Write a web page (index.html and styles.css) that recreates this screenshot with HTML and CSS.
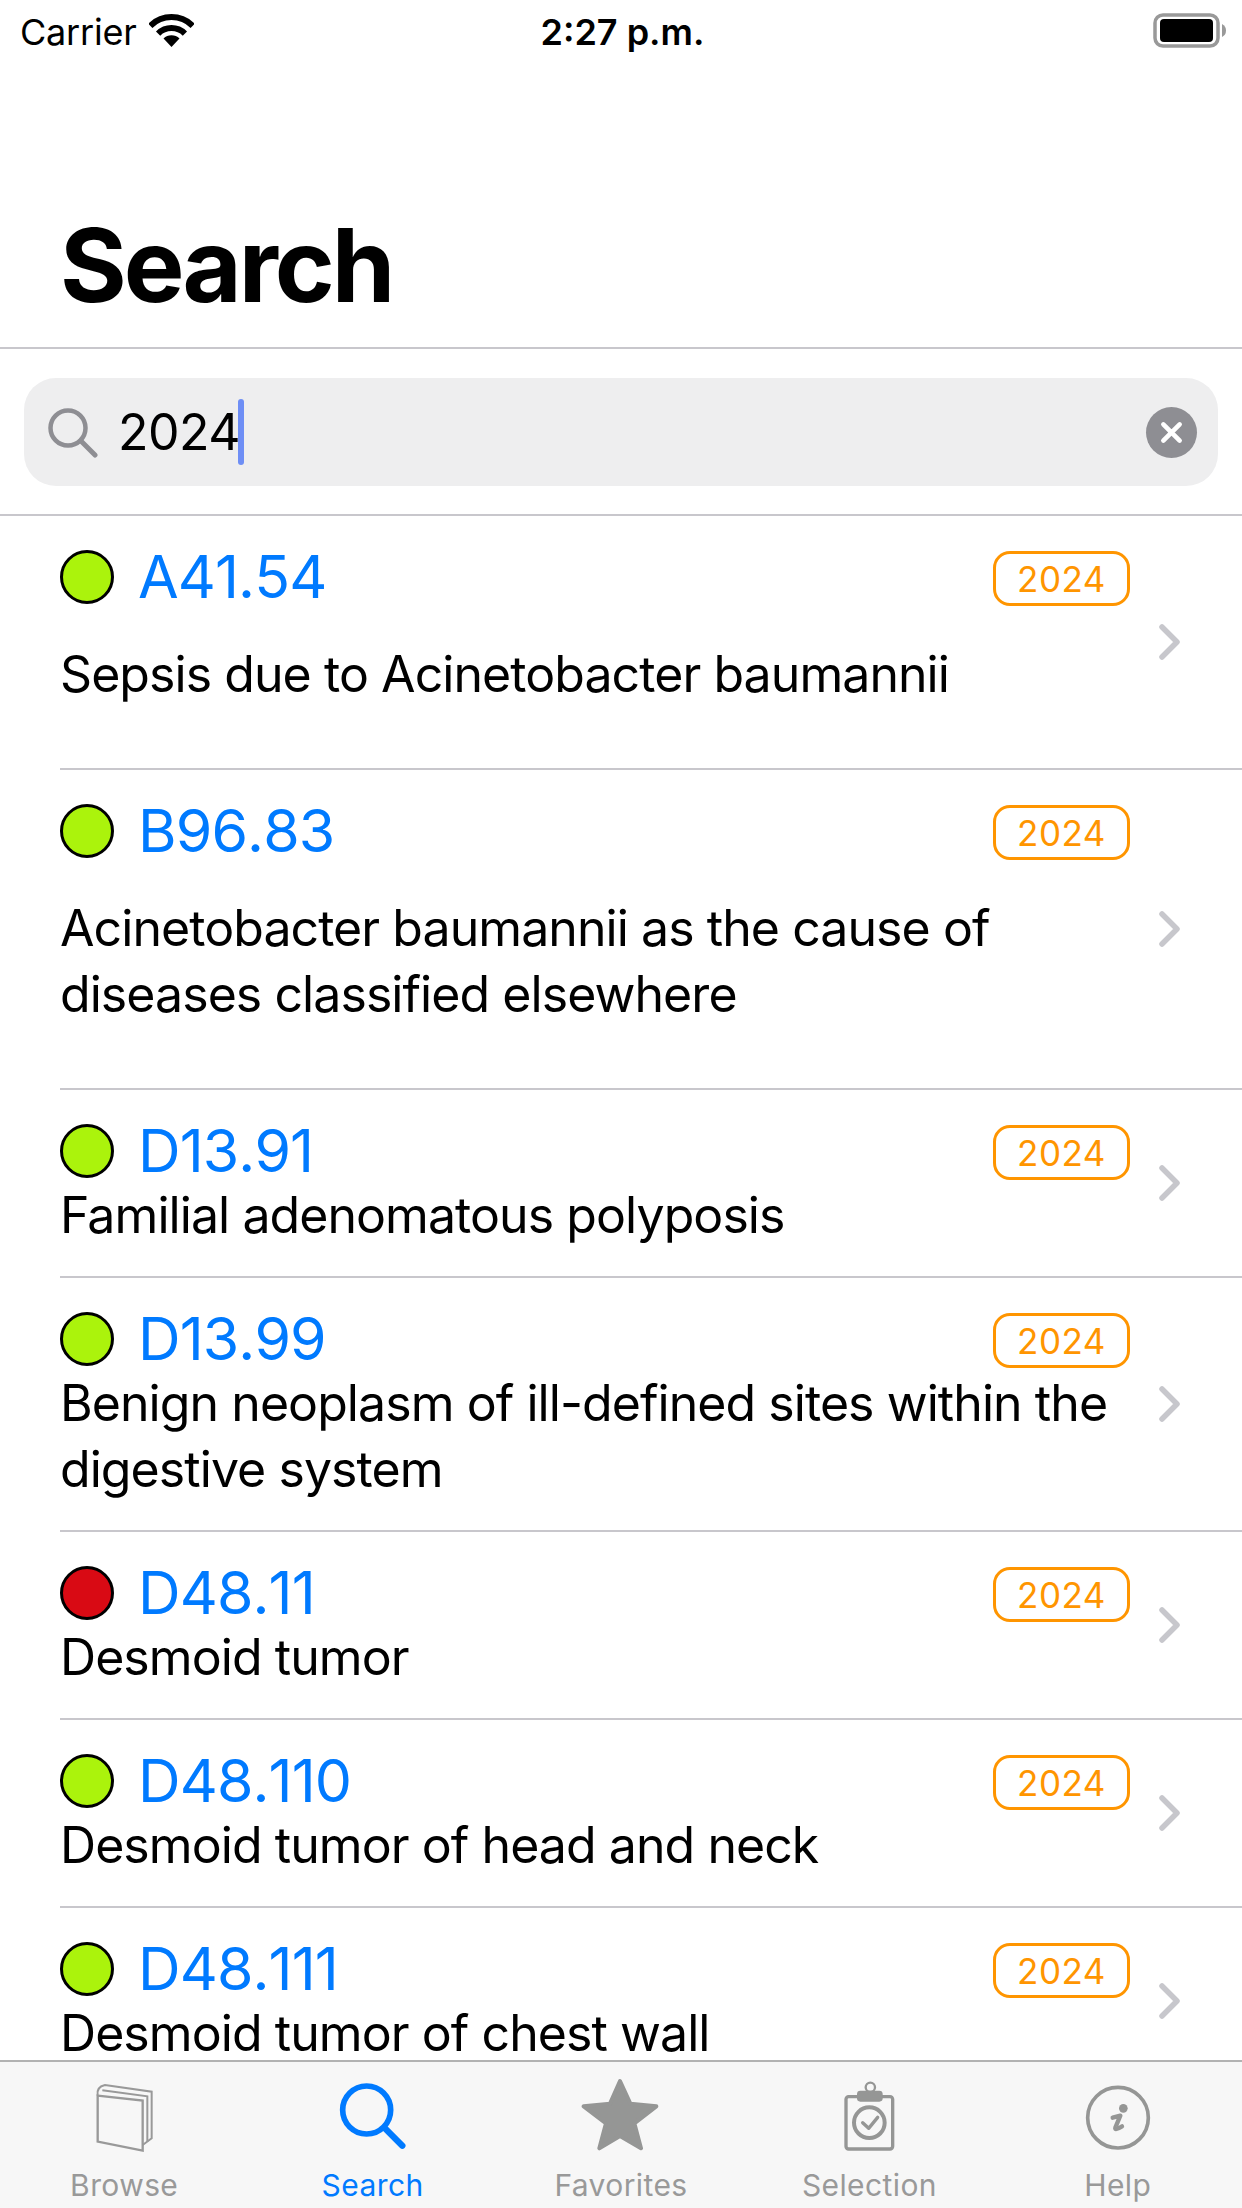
FILE: index.html
```html
<!DOCTYPE html>
<html lang="en">
<head>
<meta charset="utf-8">
<title>Search</title>
<link rel="stylesheet" href="styles.css">
</head>
<body>
<div class="app">
  <div class="status">
    <div class="status-left">
      <span>Carrier</span>
      <svg class="wifi" viewBox="0 0 45 33"><path d="M1.3 11.8A30 30 0 0 1 43.7 11.8" fill="none" stroke="#000" stroke-width="6"/><path d="M9.1 19.6A19 19 0 0 1 35.9 19.6" fill="none" stroke="#000" stroke-width="6"/><path d="M22.5 33L14.5 24.5A11.5 11.5 0 0 1 30.5 24.5Z" fill="#000"/></svg>
    </div>
    <div class="status-time">2:27 p.m.</div>
    <div class="status-right">
      <svg class="battery" viewBox="0 0 74 36"><rect x="2" y="2" width="63" height="31" rx="8" fill="none" stroke="#999" stroke-width="3.5"/><rect x="7" y="6" width="53" height="23" rx="4" fill="#000"/><path d="M69 11Q73 13 73 17.500Q73 22 69 24Z" fill="#999"/></svg>
    </div>
  </div>
  <header class="title-bar"><h1 class="title">Search</h1></header>
  <div class="search-wrap">
    <div class="search-bar">
      <svg class="search-icon" viewBox="0 0 50 50"><circle cx="20" cy="20" r="17.500" fill="none" stroke="#8e8e93" stroke-width="4.500"/><path d="M33 33L47 47" stroke="#8e8e93" stroke-width="5" stroke-linecap="round"/></svg>
      <span class="search-text">2024</span><span class="caret"></span>
      <span class="clear"><svg viewBox="0 0 50 50"><path d="M17 17L33 33M33 17L17 33" stroke="#fff" stroke-width="4.500" stroke-linecap="round"/></svg></span>
    </div>
  </div>
  <main class="list">
    <article class="row loose"><div class="row-body"><div class="main"><div class="head"><span class="dot"></span><span class="code">A41.54</span><span class="badge">2024</span></div><p class="desc">Sepsis due to Acinetobacter baumannii</p></div><svg class="chev" viewBox="0 0 21 36"><path d="M3 3L18 18L3 33" fill="none" stroke="#c7c7cc" stroke-width="5.500" stroke-linecap="round" stroke-linejoin="round"/></svg></div></article>
    <article class="row loose"><div class="row-body"><div class="main"><div class="head"><span class="dot"></span><span class="code">B96.83</span><span class="badge">2024</span></div><p class="desc">Acinetobacter baumannii as the cause of diseases classified elsewhere</p></div><svg class="chev" viewBox="0 0 21 36"><path d="M3 3L18 18L3 33" fill="none" stroke="#c7c7cc" stroke-width="5.500" stroke-linecap="round" stroke-linejoin="round"/></svg></div></article>
    <article class="row"><div class="row-body"><div class="main"><div class="head"><span class="dot"></span><span class="code">D13.91</span><span class="badge">2024</span></div><p class="desc">Familial adenomatous polyposis</p></div><svg class="chev" viewBox="0 0 21 36"><path d="M3 3L18 18L3 33" fill="none" stroke="#c7c7cc" stroke-width="5.500" stroke-linecap="round" stroke-linejoin="round"/></svg></div></article>
    <article class="row"><div class="row-body"><div class="main"><div class="head"><span class="dot"></span><span class="code">D13.99</span><span class="badge">2024</span></div><p class="desc">Benign neoplasm of ill-defined sites within the digestive system</p></div><svg class="chev" viewBox="0 0 21 36"><path d="M3 3L18 18L3 33" fill="none" stroke="#c7c7cc" stroke-width="5.500" stroke-linecap="round" stroke-linejoin="round"/></svg></div></article>
    <article class="row"><div class="row-body"><div class="main"><div class="head"><span class="dot red"></span><span class="code">D48.11</span><span class="badge">2024</span></div><p class="desc">Desmoid tumor</p></div><svg class="chev" viewBox="0 0 21 36"><path d="M3 3L18 18L3 33" fill="none" stroke="#c7c7cc" stroke-width="5.500" stroke-linecap="round" stroke-linejoin="round"/></svg></div></article>
    <article class="row"><div class="row-body"><div class="main"><div class="head"><span class="dot"></span><span class="code">D48.110</span><span class="badge">2024</span></div><p class="desc">Desmoid tumor of head and neck</p></div><svg class="chev" viewBox="0 0 21 36"><path d="M3 3L18 18L3 33" fill="none" stroke="#c7c7cc" stroke-width="5.500" stroke-linecap="round" stroke-linejoin="round"/></svg></div></article>
    <article class="row"><div class="row-body"><div class="main"><div class="head"><span class="dot"></span><span class="code">D48.111</span><span class="badge">2024</span></div><p class="desc">Desmoid tumor of chest wall</p></div><svg class="chev" viewBox="0 0 21 36"><path d="M3 3L18 18L3 33" fill="none" stroke="#c7c7cc" stroke-width="5.500" stroke-linecap="round" stroke-linejoin="round"/></svg></div></article>
  </main>
  <nav class="tabs">
    <div class="tab">
      <svg class="tab-icon" viewBox="0 0 240 228"><path d="M41 56L176 71V221L41 194Z" fill="none" stroke="#999" stroke-width="7"/><path d="M41 56Q36 30 63 24L203 44V184L176 204" fill="none" stroke="#999" stroke-width="6"/><path d="M55 40L190 58V194" fill="none" stroke="#999" stroke-width="6"/></svg>
      <span class="tab-label">Browse</span>
    </div>
    <div class="tab active">
      <svg class="tab-icon" viewBox="0 0 240 228"><circle cx="101" cy="99" r="72" fill="none" stroke="#007aff" stroke-width="17"/><path d="M155 153L208 206" stroke="#007aff" stroke-width="19" stroke-linecap="round"/></svg>
      <span class="tab-label">Search</span>
    </div>
    <div class="tab">
      <svg class="tab-icon" viewBox="0 0 240 228"><path d="M117 12L148 80L226 88L160 139L180 214L117 177L55 214L75 139L8 88L87 80Z" fill="#959695" stroke="#959695" stroke-width="12" stroke-linejoin="round"/></svg>
      <span class="tab-label">Favorites</span>
    </div>
    <div class="tab">
      <svg class="tab-icon" viewBox="0 0 240 228"><rect x="51" y="59" width="140" height="157" rx="8" fill="none" stroke="#959695" stroke-width="10"/><rect x="84" y="41" width="77" height="33" rx="10" fill="#959695"/><circle cx="124" cy="31" r="14" fill="none" stroke="#959695" stroke-width="7"/><circle cx="121" cy="137" r="46" fill="none" stroke="#959695" stroke-width="12"/><path d="M101 137L119 154L146 121" fill="none" stroke="#959695" stroke-width="10" stroke-linecap="round" stroke-linejoin="round"/></svg>
      <span class="tab-label">Selection</span>
    </div>
    <div class="tab">
      <svg class="tab-icon" viewBox="0 0 240 228"><circle cx="120" cy="122" r="91" fill="none" stroke="#959695" stroke-width="11"/><circle cx="136" cy="94" r="13" fill="#959695"/><path d="M104 122L127 116L112 152Q109 162 132 148" fill="none" stroke="#959695" stroke-width="13" stroke-linejoin="round" stroke-linecap="round"/></svg>
      <span class="tab-label">Help</span>
    </div>
  </nav>
</div>
</body>
</html>
```
FILE: styles.css
```css
* { box-sizing: border-box; }
html, body { margin: 0; padding: 0; background: #fff; }
body { font-family: Inter, "Noto Sans", sans-serif; color: #000; }
.app { width: 1242px; height: 2208px; display: flex; flex-direction: column; overflow: hidden; background: #fff; }

.status { height: 64px; flex: none; display: grid; grid-template-columns: 1fr auto 1fr; align-items: center; padding: 0 15px 0 20px; font-size: 36px; }
.status-left { display: flex; align-items: center; gap: 12px; letter-spacing: -.2px; }
.status-time { font-weight: 600; letter-spacing: 0; margin-left: -2px; }
.status-right { display: flex; justify-content: flex-end; }
.wifi { width: 45px; height: 33px; display: block; margin-top: -4px; }
.battery { width: 74px; height: 36px; display: block; margin-top: -3px; }

.title-bar { height: 285px; flex: none; border-bottom: 2px solid #c8c7cc; padding: 0 0 0 60px; display: flex; align-items: flex-end; }
.title { margin: 0 0 22px; font-size: 102px; line-height: 120px; font-weight: 700; letter-spacing: -3px; }

.search-wrap { height: 167px; flex: none; padding: 29px 24px 0; border-bottom: 2px solid #c8c7cc; }
.search-bar { height: 108px; border-radius: 32px; background: #eeeeef; display: flex; align-items: center; padding: 0 21px 0 24px; }
.search-icon { width: 50px; height: 50px; flex: none; margin-top: 2px; }
.search-text { font-size: 50px; margin-left: 20px; letter-spacing: -.5px; }
.caret { width: 6px; height: 66px; border-radius: 3px; background: #6e8ef5; margin-left: -2px; }
.clear { width: 51px; height: 51px; border-radius: 50%; background: #8e8e93; margin-left: auto; display: block; }
.clear svg { width: 51px; height: 51px; display: block; }

.list { flex: 1; min-height: 0; overflow: hidden; }
.row { padding-left: 60px; }
.row-body { display: flex; align-items: center; border-bottom: 2px solid #c8c7cc; padding: 0 62px 0 0; }
.main { flex: 1; min-width: 0; padding: 33px 0 28px; }
.head { height: 56px; display: flex; align-items: center; }
.dot { width: 54px; height: 54px; border-radius: 50%; background: #abf30c; border: 3px solid #000; flex: none; }
.dot.red { background: #d90a14; }
.code { font-size: 59px; color: #007aff; margin-left: 24px; letter-spacing: -.9px; line-height: 56px; font-kerning: none; }
.badge { margin-left: auto; margin-top: 3px; width: 137px; height: 55px; border: 3px solid #ff9500; border-radius: 17px; color: #ff9500; font-size: 35px; letter-spacing: .5px; display: flex; align-items: center; justify-content: center; }
.desc { margin: 3px 0 0; font-size: 50px; line-height: 66px; letter-spacing: -.93px; }
.chev { width: 21px; height: 36px; flex: none; margin-left: 29px; }
.row.loose .desc { margin-top: 36px; }
.row.loose .main { padding-bottom: 61px; }

.tabs { height: 148px; flex: none; display: grid; grid-template-columns: repeat(5, 1fr); background: #f7f7f7; border-top: 2px solid #b2b2b2; padding-top: 15px; }
.tab { display: flex; flex-direction: column; align-items: center; color: #999; }
.tab.active { color: #007aff; }
.tab-icon { width: 80px; height: 76px; display: block; }
.tab-label { font-size: 30px; line-height: 36px; margin-top: 14px; letter-spacing: .4px; }
```
